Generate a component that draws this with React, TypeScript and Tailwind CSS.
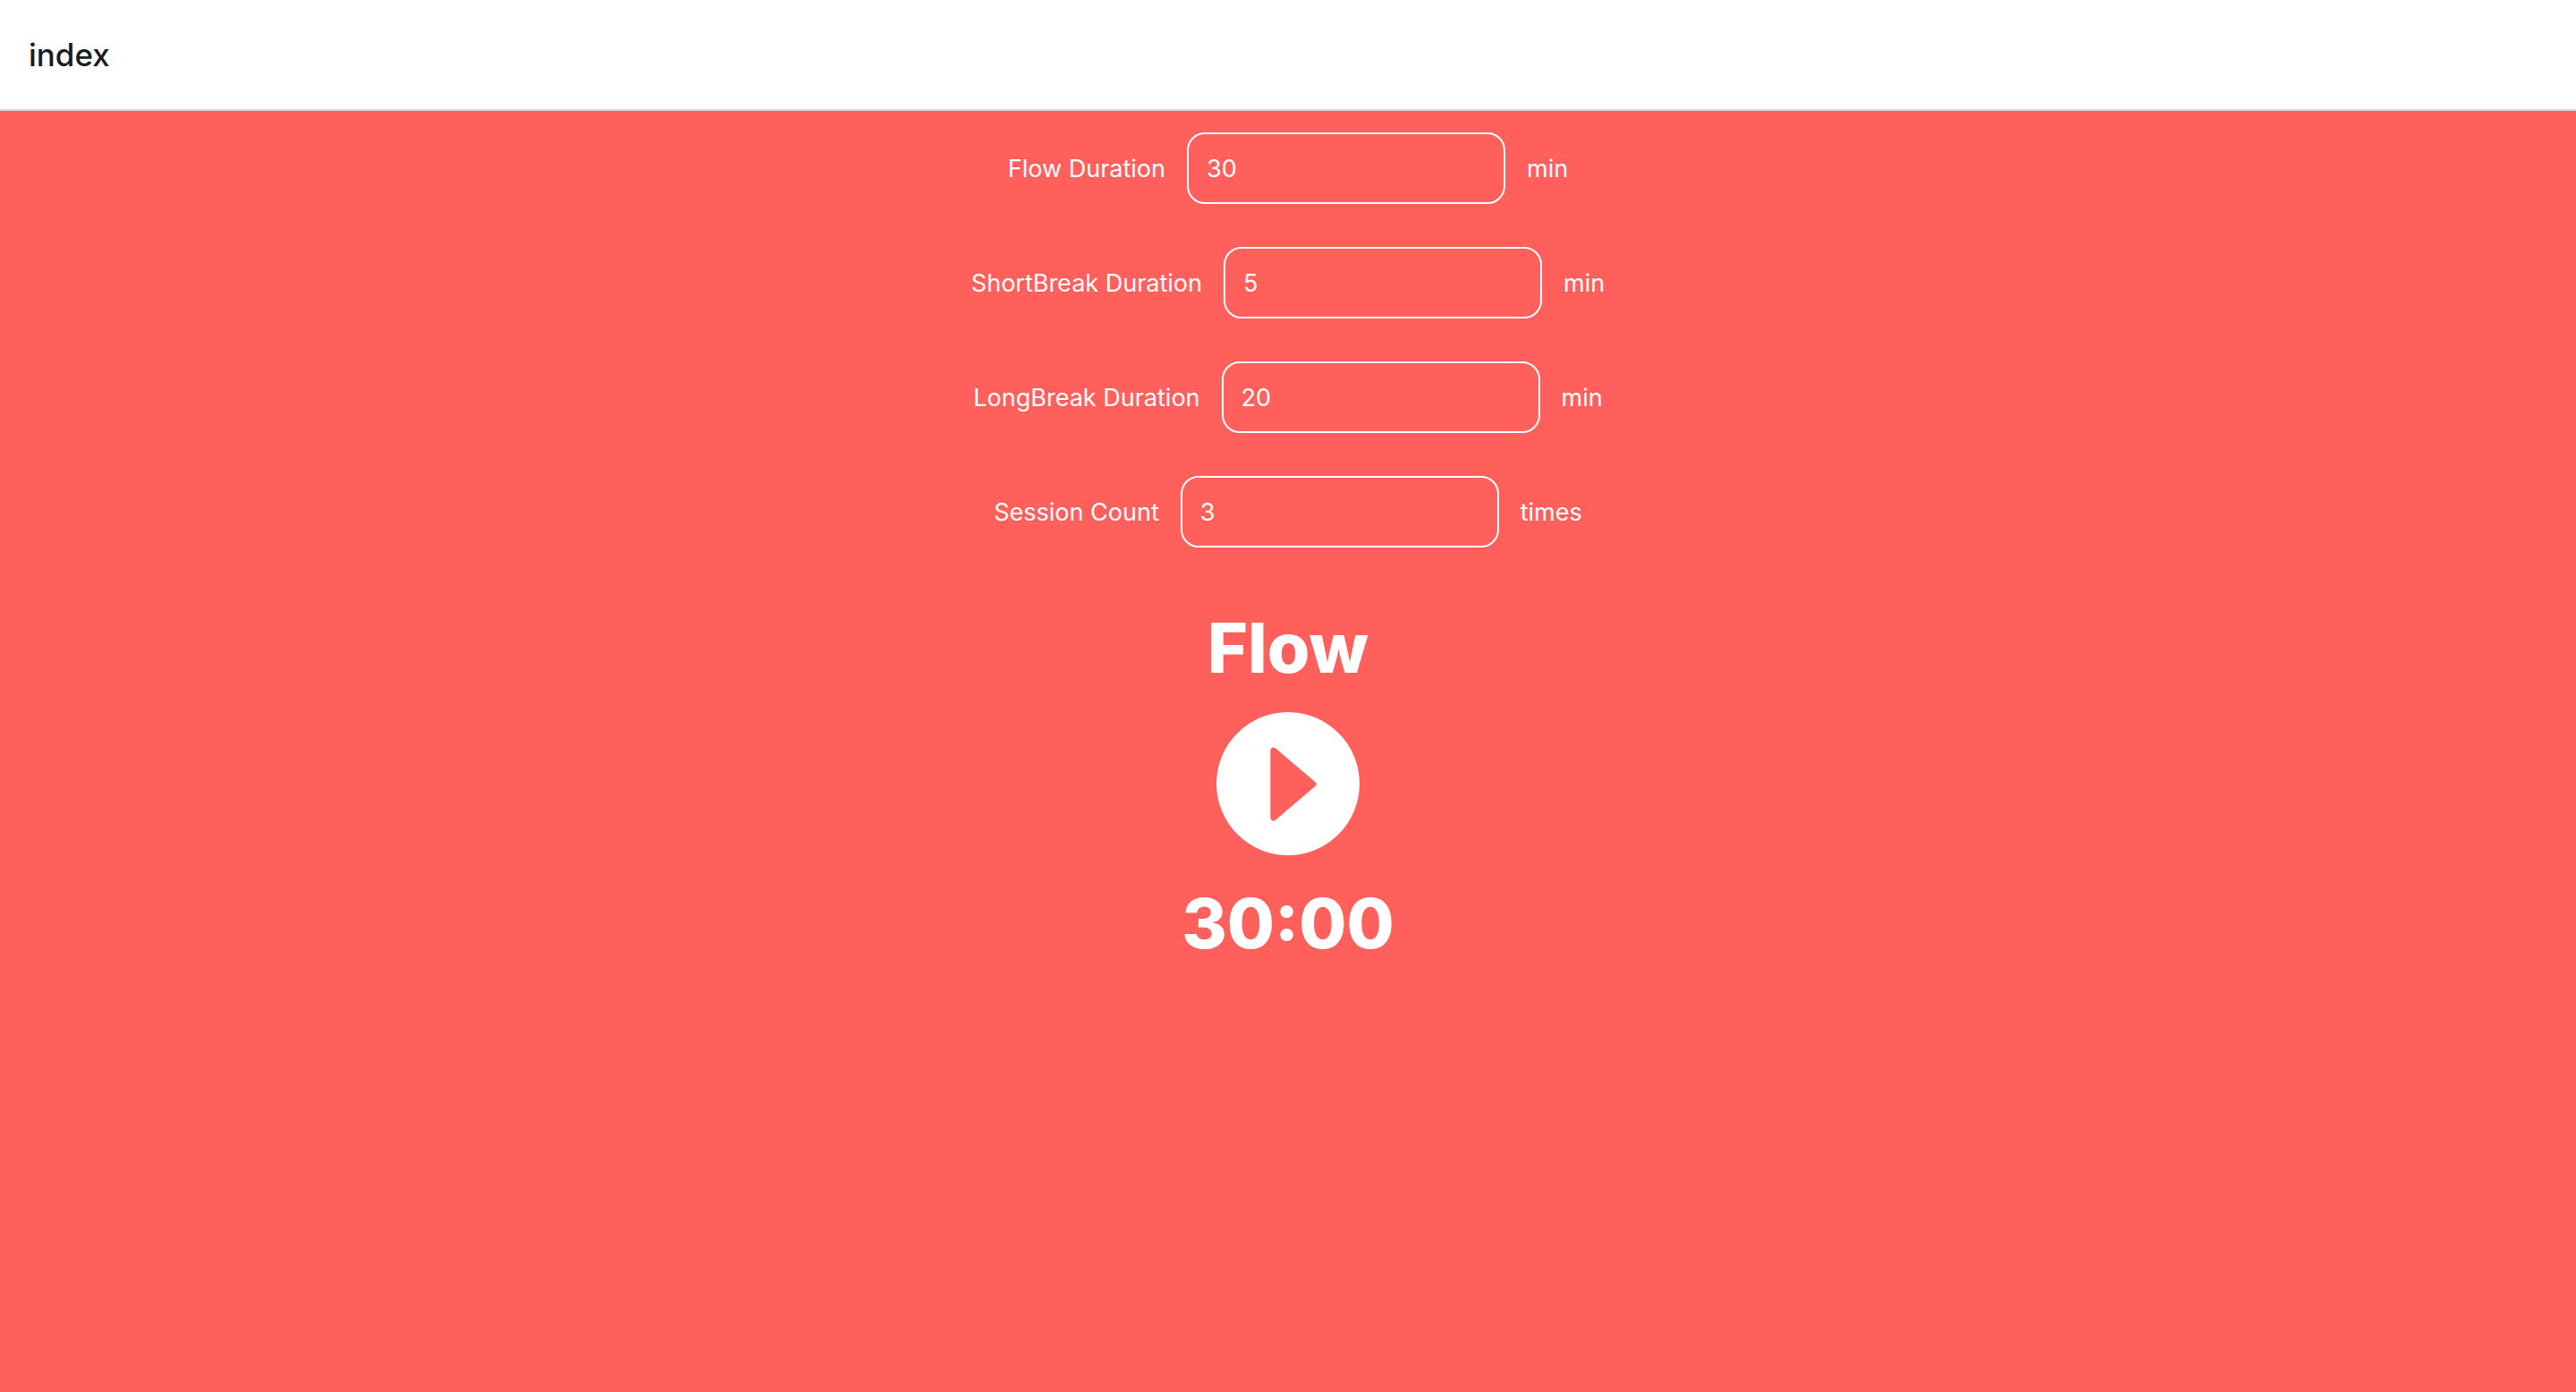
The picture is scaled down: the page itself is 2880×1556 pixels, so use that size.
import { useState } from "react";

type FieldProps = {
  id: string;
  label: string;
  unit: string;
  initial: string;
};

function Field({ id, label, unit, initial }: FieldProps) {
  const [value, setValue] = useState(initial);
  return (
    <div className="flex items-baseline justify-center gap-6 py-6 text-[27px] leading-9">
      <label htmlFor={id}>{label}</label>
      <input
        id={id}
        type="text"
        inputMode="numeric"
        value={value}
        onChange={(e) => setValue(e.target.value)}
        className="h-20 w-[356px] rounded-[20px] border-2 border-white bg-transparent px-5 outline-none"
      />
      <span>{unit}</span>
    </div>
  );
}

const fields: FieldProps[] = [
  { id: "flow", label: "Flow Duration", unit: "min", initial: "30" },
  { id: "short-break", label: "ShortBreak Duration", unit: "min", initial: "5" },
  { id: "long-break", label: "LongBreak Duration", unit: "min", initial: "20" },
  { id: "sessions", label: "Session Count", unit: "times", initial: "3" },
];

function PlayIcon() {
  return (
    <svg viewBox="0 0 160 160" className="size-40" aria-hidden="true">
      <path
        fill="currentColor"
        fillRule="evenodd"
        d="M80 0a80 80 0 1 1 0 160a80 80 0 0 1 0-160ZM60.3 43.2V117.8C60.3 121.2 63.6 122.8 66.2 120.6L110.8 82.4Q112.9 80.5 110.8 78.6L66.2 40.4C63.6 38.2 60.3 39.8 60.3 43.2Z"
      />
    </svg>
  );
}

export default function App() {
  return (
    <div className="flex min-h-screen flex-col bg-[#ff605c] font-['Inter',sans-serif] text-white">
      <header className="flex h-[124px] items-center border-b-2 border-[#d8d8d8] bg-white px-8">
        <h1 className="text-[35px] leading-10 font-medium text-[#1c1c1e]">index</h1>
      </header>
      <main className="flex flex-col">
        <form>
          {fields.map((field) => (
            <Field key={field.id} {...field} />
          ))}
        </form>
        <section className="flex flex-col items-center pt-10 text-[77px] leading-[96px] font-extrabold">
          <h2>Flow</h2>
          <button type="button" aria-label="Start" className="mt-6 mb-7 rounded-full">
            <PlayIcon />
          </button>
          <p>30:00</p>
        </section>
      </main>
    </div>
  );
}
